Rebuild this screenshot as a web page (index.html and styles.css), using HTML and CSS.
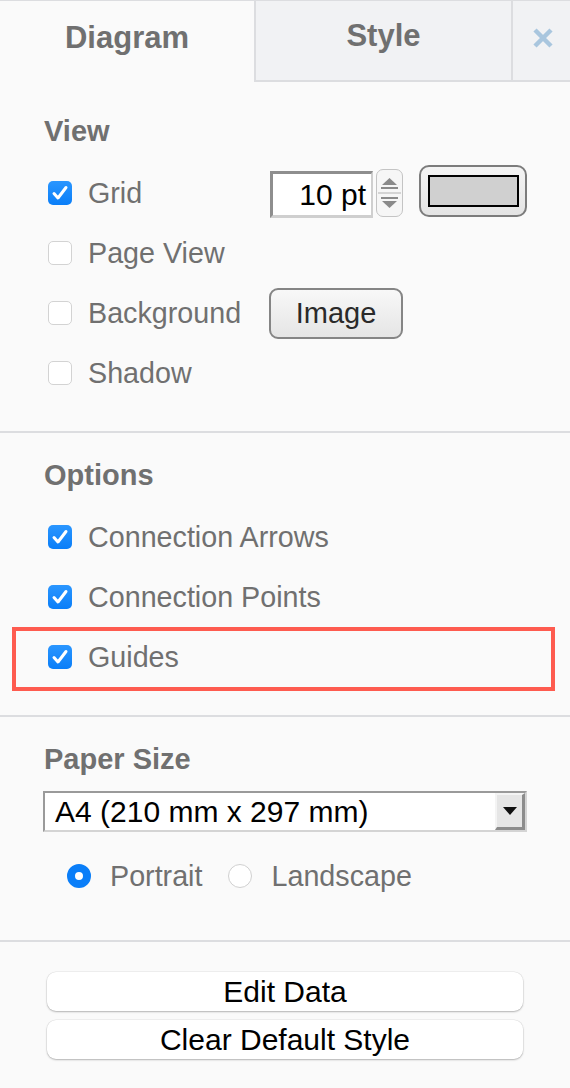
FILE: index.html
```html
<!DOCTYPE html>
<html>
<head>
<meta charset="utf-8">
<link rel="stylesheet" href="styles.css">
</head>
<body>
<div class="panel">
  <div class="tabs">
    <div class="tab tab-active">Diagram</div>
    <div class="tab tab-style">Style</div>
    <div class="tab tab-close">
      <svg width="22" height="22" viewBox="0 0 22 22"><path d="M3 3 L19 19 M19 3 L3 19" stroke="#a9c6de" stroke-width="4.5" stroke-linecap="butt"/></svg>
    </div>
  </div>

  <div class="section sec-view">
    <div class="title">View</div>
    <div class="row">
      <label class="check"><span class="box on"><svg width="24" height="24" viewBox="0 0 24 24"><path d="M6 12.5 L10 17 L18 6.5" fill="none" stroke="#fff" stroke-width="3" stroke-linecap="round" stroke-linejoin="round"/></svg></span><span class="lbl">Grid</span></label>
      <div class="grid-controls">
        <div class="numinput">10 pt</div>
        <div class="spinner">
          <svg width="27" height="48" viewBox="0 0 27 48">
            <path d="M6 16 L13.5 9 L21 16 Z" fill="#8a8a8a"/>
            <path d="M5 19 H22" stroke="#8a8a8a" stroke-width="2"/>
            <path d="M2 24 H25" stroke="#c8c8c8" stroke-width="1.5"/>
            <path d="M5 29 H22" stroke="#8a8a8a" stroke-width="2"/>
            <path d="M6 32 L13.5 39 L21 32 Z" fill="#8a8a8a"/>
          </svg>
        </div>
        <div class="colorbtn"><span class="swatch"></span></div>
      </div>
    </div>
    <div class="row">
      <label class="check"><span class="box"></span><span class="lbl">Page View</span></label>
    </div>
    <div class="row">
      <label class="check"><span class="box"></span><span class="lbl">Background</span></label>
      <div class="imgbtn">Image</div>
    </div>
    <div class="row">
      <label class="check"><span class="box"></span><span class="lbl">Shadow</span></label>
    </div>
  </div>

  <div class="section sec-options">
    <div class="title">Options</div>
    <div class="row">
      <label class="check"><span class="box on"><svg width="24" height="24" viewBox="0 0 24 24"><path d="M6 12.5 L10 17 L18 6.5" fill="none" stroke="#fff" stroke-width="3" stroke-linecap="round" stroke-linejoin="round"/></svg></span><span class="lbl">Connection Arrows</span></label>
    </div>
    <div class="row">
      <label class="check"><span class="box on"><svg width="24" height="24" viewBox="0 0 24 24"><path d="M6 12.5 L10 17 L18 6.5" fill="none" stroke="#fff" stroke-width="3" stroke-linecap="round" stroke-linejoin="round"/></svg></span><span class="lbl">Connection Points</span></label>
    </div>
    <div class="row row-marked">
      <label class="check"><span class="box on"><svg width="24" height="24" viewBox="0 0 24 24"><path d="M6 12.5 L10 17 L18 6.5" fill="none" stroke="#fff" stroke-width="3" stroke-linecap="round" stroke-linejoin="round"/></svg></span><span class="lbl">Guides</span></label>
      <div class="highlight"></div>
    </div>
  </div>

  <div class="section sec-paper">
    <div class="title">Paper Size</div>
    <div class="select">
      <span class="seltext">A4 (210 mm x 297 mm)</span>
      <span class="selarrow"><svg width="14" height="8" viewBox="0 0 14 8"><path d="M0 0 H14 L7 8 Z" fill="#111"/></svg></span>
    </div>
    <div class="radios">
      <label class="radio"><span class="dot on"></span><span class="lbl">Portrait</span></label>
      <label class="radio"><span class="dot"></span><span class="lbl">Landscape</span></label>
    </div>
  </div>

  <div class="section sec-buttons">
    <div class="btn">Edit Data</div>
    <div class="btn">Clear Default Style</div>
  </div>
</div>
</body>
</html>
```
FILE: styles.css
```css
html, body {
  margin: 0;
  padding: 0;
  background: #fafafa;
}
body {
  font-family: "Liberation Sans", Arial, sans-serif;
  width: 570px;
  height: 1088px;
  overflow: hidden;
}
.panel {
  display: flex;
  flex-direction: column;
}
.tabs {
  display: flex;
  height: 82px;
  border-top: 1px solid #dcdde0;
  box-sizing: border-box;
}
.tab {
  box-sizing: border-box;
  font-weight: bold;
  font-size: 31px;
  line-height: 36px;
  color: #707070;
  text-align: center;
  padding-top: 19px;
}
.tab-active {
  width: 254px;
  background: #fafafa;
}
.tab-style {
  width: 257px;
  background: #f1f2f4;
  border-left: 2px solid #dcdde0;
  border-bottom: 2px solid #dcdde0;
  padding-top: 17px;
}
.tab-close {
  flex: 1;
  background: #f1f2f4;
  border-left: 2px solid #dcdde0;
  border-bottom: 2px solid #dcdde0;
  display: flex;
  justify-content: center;
  padding-top: 26px;
  padding-left: 2px;
}
.section {
  position: relative;
  padding: 24px 0 28px 44px;
  border-bottom: 2px solid #dcdde0;
}
.sec-view {
  padding-top: 31px;
}
.title {
  font-size: 29px;
  font-weight: bold;
  line-height: 36px;
  color: #707070;
  margin-bottom: 14px;
}
.row {
  height: 60px;
  display: flex;
  align-items: center;
  position: relative;
}
.check {
  display: flex;
  align-items: center;
  width: 222px;
  margin-left: 4px;
  flex-shrink: 0;
}
.box {
  width: 24px;
  height: 24px;
  box-sizing: border-box;
  border-radius: 5px;
  background: #fff;
  border: 1px solid #d3d3d3;
  display: flex;
  align-items: center;
  justify-content: center;
  flex-shrink: 0;
}
.box.on {
  background: linear-gradient(#2a96ff, #0a7ef8);
  border: none;
}
.lbl {
  font-size: 28.7px;
  color: #707070;
  margin-left: 16px;
  white-space: nowrap;
  line-height: 34px;
}
.grid-controls {
  display: flex;
  align-items: center;
  margin-top: 2px;
}
.numinput {
  width: 103px;
  height: 47px;
  box-sizing: border-box;
  background: #fff;
  border-style: solid;
  border-width: 3px 2px 3px 3px;
  border-color: #8e8e8e #cfcfcf #cfcfcf #8e8e8e;
  font-size: 30px;
  color: #000;
  text-align: right;
  line-height: 41px;
  padding-right: 5px;
}
.spinner {
  width: 27px;
  height: 48px;
  margin-left: 3px;
  box-sizing: border-box;
  border: 1.5px solid #c4c4c4;
  border-radius: 7px;
  background: #f6f6f6;
  overflow: hidden;
  display: flex;
  align-items: center;
  justify-content: center;
  margin-top: -3px;
}
.spinner svg {
  flex-shrink: 0;
}
.colorbtn {
  width: 108px;
  height: 52px;
  margin-left: 16px;
  box-sizing: border-box;
  border: 2px solid #7c7c7c;
  border-radius: 10px;
  background: linear-gradient(#f4f4f4, #e4e4e4);
  display: flex;
  align-items: center;
  justify-content: center;
  margin-top: -6px;
}
.swatch {
  width: 91px;
  height: 32px;
  box-sizing: border-box;
  border: 2.5px solid #000;
  background: #d0d0d0;
}
.imgbtn {
  width: 134px;
  height: 51px;
  box-sizing: border-box;
  border: 2px solid #858585;
  border-radius: 9px;
  background: linear-gradient(#f8f8f8, #e5e5e5);
  font-size: 29px;
  color: #2a2a2a;
  display: flex;
  align-items: center;
  justify-content: center;
  margin-left: -1px;
  margin-top: 1px;
}
.highlight {
  position: absolute;
  left: -32px;
  top: 0;
  width: 543px;
  height: 64px;
  box-sizing: border-box;
  border: 4.5px solid #fe5b4f;
}
.select {
  width: 484px;
  height: 41px;
  margin-left: -1px;
  box-sizing: border-box;
  background: #fff;
  border-style: solid;
  border-width: 2px;
  border-color: #9a9a9a #d4d4d4 #d4d4d4 #9a9a9a;
  display: flex;
  align-items: stretch;
}
.seltext {
  flex: 1;
  font-size: 30px;
  color: #000;
  line-height: 38px;
  padding-left: 10px;
  white-space: nowrap;
}
.selarrow {
  width: 30px;
  box-sizing: border-box;
  background: #e6e6e6;
  border-style: solid;
  border-width: 2px 3px 3px 2px;
  border-color: #f4f4f4 #8c8c8c #8c8c8c #f4f4f4;
  display: flex;
  align-items: center;
  justify-content: center;
}
.radios {
  display: flex;
  align-items: center;
  height: 60px;
  margin-top: 14px;
  margin-left: 23px;
}
.radio {
  display: flex;
  align-items: center;
  margin-right: 26px;
}
.radio .lbl {
  margin-left: 19px;
}
.dot {
  width: 24px;
  height: 24px;
  box-sizing: border-box;
  border-radius: 50%;
  background: #fff;
  border: 1px solid #d0d0d0;
  flex-shrink: 0;
}
.dot.on {
  border: 8px solid #0a7ef8;
  background: #fff;
}
.sec-paper {
  padding-bottom: 34px;
}
.sec-buttons {
  border-bottom: none;
  padding: 30px 0 0 47px;
  display: flex;
  flex-direction: column;
  gap: 9px;
}
.btn {
  width: 476px;
  height: 39px;
  box-sizing: border-box;
  background: #fff;
  border-radius: 9px;
  box-shadow: 0 1px 2px rgba(0,0,0,0.25), 0 0 0 0.5px rgba(0,0,0,0.08);
  font-size: 30px;
  color: #000;
  text-align: center;
  line-height: 40px;
}
```
